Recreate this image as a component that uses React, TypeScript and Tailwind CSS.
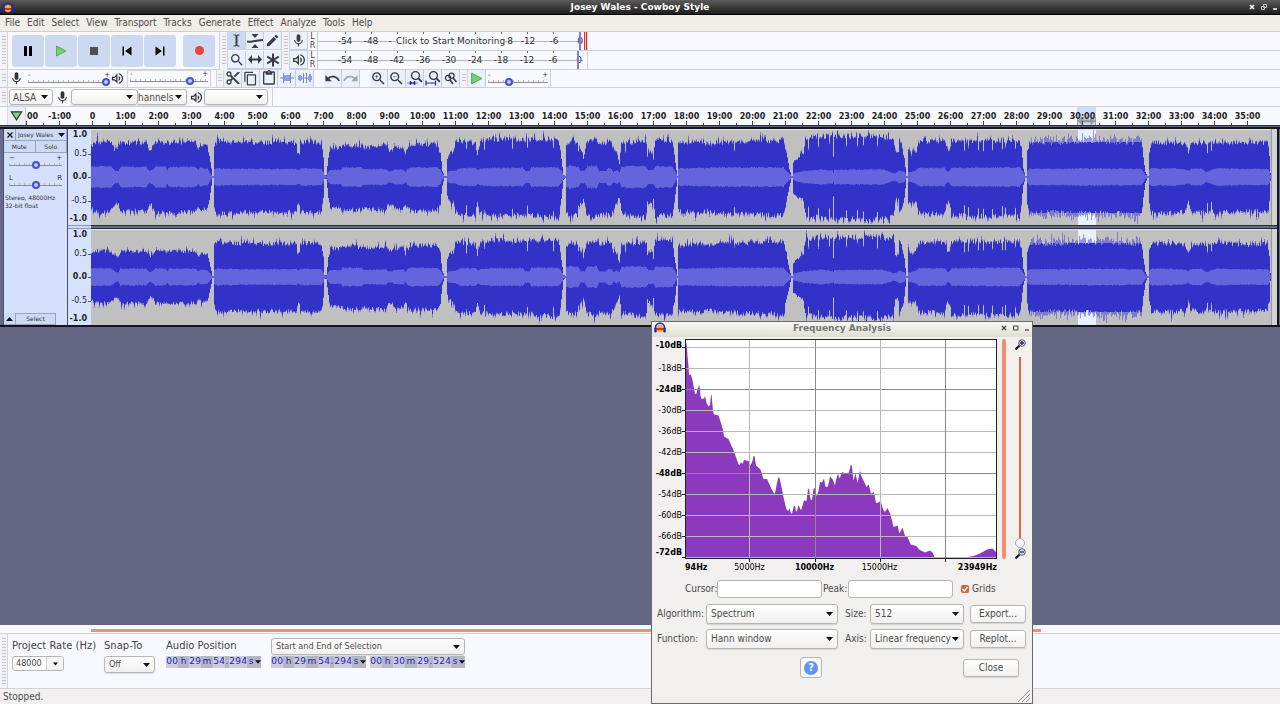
import React from "react";
import {
  MdSkipPrevious, MdSkipNext, MdEdit, MdMic, MdOutlineVolumeUp, MdContentCut, MdContentCopy,
  MdContentPaste, MdZoomIn, MdZoomOut, MdSearch, MdUndo, MdRedo,
} from "react-icons/md";

const COND = "font-['DejaVu_Sans_Condensed','DejaVu_Sans',sans-serif]";

/* ---------- waveform ---------- */

type Key = [number, number, number, number];

const CLIP_START = 91;
const CLIP_WIDTH = 1180;

// position, upper peak, lower peak, rms
const KEYS: Key[] = [
  [91, 30, 30, 10], [94, 35, 35, 10.5], [110, 35, 35, 10.5], [113, 29, 30, 8], [115, 27, 26, 6], [118, 28, 28, 6], [120, 34, 34, 10], [146, 34, 34, 10],
  [149, 27, 27, 6], [152, 29, 27, 7], [155, 34, 35, 10.5], [165, 34, 35, 10], [167, 34, 35, 7], [169, 34, 35, 10], [195, 34, 34, 10], [198, 28, 30, 7], [200, 31, 32, 9],
  [207, 30, 31, 8], [209, 20, 22, 5], [211, 8, 9, 2], [212, 1, 1, 1], [213, 1, 1, 1], [214, 32, 30, 7.5], [217, 36, 36, 8.5], [240, 34, 35, 8], [296, 34, 35, 8],
  [297, 24, 26, 7], [299, 24, 26, 7], [300, 35, 35, 8.5], [321, 34, 35, 8], [323, 20, 20, 5], [324, 2, 2, 2], [326, 2, 2, 1], [328, 20, 20, 5], [330, 29, 30, 7],
  [340, 29, 30, 7], [342, 31, 32, 9.5], [361, 31, 33, 9.5], [363, 29, 31, 7.5], [385, 31, 33, 8], [388, 27, 27, 5.5], [392, 27, 27, 6], [394, 29, 31, 7.5], [403, 29, 31, 7.5],
  [405, 23, 25, 5], [407, 28, 30, 8], [410, 32, 33, 9.5], [436, 32, 33, 9.5], [440, 24, 26, 7], [442, 6, 8, 3], [444, 1, 1, 1], [446, 1, 1, 1], [447, 18, 18, 5],
  [449, 24, 24, 6], [453, 24, 25, 6], [455, 35, 34, 6.5], [460, 36, 37, 9], [475, 33, 37, 9], [477, 22, 26, 7], [480, 35, 36, 8], [490, 38, 38, 9], [522, 37, 38, 9],
  [525, 37, 37, 6], [529, 37, 37, 6], [531, 37, 38, 9.5], [558, 38, 41, 9.5], [561, 18, 22, 6], [563, 2, 3, 2], [565, 1, 1, 1], [566, 32, 34, 10], [570, 36, 38, 11], [578, 34, 38, 10],
  [580, 26, 26, 6], [584, 24, 26, 6], [587, 36, 38, 11], [596, 36, 39, 11], [599, 34, 37, 5.5], [605, 34, 37, 6], [608, 36, 38, 8.5], [611, 34, 38, 8], [613, 26, 32, 5],
  [616, 24, 26, 7], [619, 14, 20, 5], [621, 34, 36, 10], [630, 34, 39, 11], [645, 36, 40, 10.5], [648, 24, 26, 7], [653, 24, 26, 7], [655, 37, 39, 11], [672, 36, 38, 10],
  [675, 14, 18, 5], [677, 1, 1, 1], [678, 32, 34, 8.5], [700, 34, 36, 9], [708, 32, 33, 9], [715, 34, 36, 9.5], [783, 36, 38, 9.5], [786, 24, 24, 6], [789, 8, 10, 3], [791, 1, 1, 1],
  [792, 1, 1, 1], [793, 15, 17, 3.5], [803, 23, 23, 6], [805, 38, 37, 6], [820, 41, 41, 7.5], [832, 40, 41, 6.5], [833, 20, 20, 5], [834, 40, 41, 7], [860, 41, 42, 7.5],
  [882, 40, 42, 7.5], [893, 39, 40, 4], [895, 22, 22, 4], [898, 24, 22, 6], [899, 36, 36, 6.5], [901, 32, 34, 6], [904, 18, 20, 5], [906, 1, 1, 1], [907, 1, 1, 1], [908, 28, 25, 5],
  [911, 22, 25, 5], [916, 26, 26, 7], [918, 35, 36, 9], [944, 36, 36, 9], [947, 26, 24, 5], [949, 27, 26, 6], [951, 36, 38, 9], [1019, 36, 39, 9.5], [1021, 30, 26, 7],
  [1023, 8, 8, 4], [1025, 1, 1, 1], [1026, 1, 1, 1], [1027, 26, 28, 6], [1029, 34, 36, 8], [1060, 34, 35, 8], [1085, 36, 36, 8.5], [1141, 34, 36, 8], [1143, 20, 20, 5],
  [1145, 5, 6, 2], [1147, 1, 1, 1], [1148, 1, 1, 1], [1149, 26, 26, 7], [1151, 34, 35, 8.5], [1170, 34, 36, 8.5], [1185, 32, 34, 7.5], [1188, 25, 25, 6], [1191, 32, 34, 8],
  [1200, 34, 36, 8.5], [1206, 32, 34, 5], [1211, 33, 34, 7], [1216, 35, 36, 8.5], [1240, 33, 34, 8], [1267, 34, 34, 8], [1269, 22, 24, 6], [1270, 4, 4, 2], [1271, 0, 0, 0],
];

// narrow gaps inside the loud passages
const NOTCHES = [578, 583, 625, 647, 653, 734, 808, 818, 829, 846, 857, 863, 877, 964, 968, 978, 983, 992, 1002, 1005, 1015, 466, 484, 512, 527, 553, 1207, 1211];

function rand(n: number) {
  const s = Math.sin(n * 127.1 + 311.7) * 43758.5453;
  return s - Math.floor(s);
}

function sample(x: number): [number, number, number] {
  let i = 0;
  while (i < KEYS.length - 2 && KEYS[i + 1][0] <= x) i++;
  const a = KEYS[i];
  const b = KEYS[i + 1];
  const t = Math.min(1, Math.max(0, (x - a[0]) / (b[0] - a[0])));
  return [a[1] + (b[1] - a[1]) * t, a[2] + (b[2] - a[2]) * t, a[3] + (b[3] - a[3]) * t];
}

function buildWave(channel: number) {
  const mid = 48;
  let peaks = "";
  let selected = "";
  let body = "";
  let rms = "";
  for (let i = 0; i < CLIP_WIDTH; i++) {
    const x = i + CLIP_START;
    const [t, b, r] = sample(x);
    const gain = channel === 1 ? (x < 213 ? 0.74 : 0.97) : 1;
    const n = i + channel * 31;
    let top = t * gain * (1 + (rand(n * 3.3) - 0.5) * 0.14);
    let bot = b * gain * (1 + (rand(n * 5.7 + 9) - 0.5) * 0.14);
    if (NOTCHES.includes(x)) {
      top *= 0.75;
      bot *= 0.78;
    }
    const held = x > 1029 && x < 1142;
    if (held) {
      top = Math.min(top, 35 * gain);
      bot = Math.min(bot, 36 * gain);
    }
    const spikeT = rand(n * 7.1 + 2) > 0.84 ? rand(n * 2.9) * 6 : 0;
    const spikeB = rand(n * 9.7 + 5) > 0.84 ? rand(n * 4.1) * 6 : 0;
    const haloT = rand(n * 1.9 + 4) * (held ? 7 : 2);
    const haloB = rand(n * 2.3 + 6) * (held ? 7 : 2);
    const loud = t > 20 ? 1 : 0;
    const bt = Math.min(46, top + (held ? 0 : spikeT * loud * 0.7));
    const bb = Math.min(46, bot + (held ? 0 : spikeB * loud * 0.7));
    const pt = Math.min(47, top + (spikeT + haloT) * loud);
    const pb = Math.min(47, bot + (spikeB + haloB) * loud);
    const bar = (u: number, d: number) => `M${i} ${(mid - u).toFixed(1)}h1V${(mid + d).toFixed(1)}h-1z`;
    if (x >= 1078 && x < 1096) selected += bar(pt, pb);
    else peaks += bar(pt, pb);
    body += bar(bt, bb);
    const rr = r * (0.95 + rand(n * 6.1) * 0.12) * (channel === 1 ? (x < 213 ? 0.82 : 0.96) : 1);
    rms += bar(rr, rr);
  }
  return { peaks, selected, body, rms };
}

const WAVES = [buildWave(0), buildWave(1)];

function Waveform({ channel }: { channel: number }) {
  const w = WAVES[channel];
  return (
    <svg width={CLIP_WIDTH} height="96" viewBox="0 0 1180 96" className="block shrink-0" role="img" aria-label={`Channel ${channel + 1}`}>
      <rect width="1180" height="96" fill="#c0c0c0" />
      <rect x="987" width="18" height="96" fill="#e9f0ff" />
      <rect width="1180" height="1" fill="#e4e4e4" />
      <path d={w.peaks} fill="#7c7cce" />
      <path d={w.selected} fill="#9494ee" />
      <path d={w.body} fill="#3232c8" />
      <path d={w.rms} fill="#6464dc" />
    </svg>
  );
}

/* ---------- small parts ---------- */

function Logo() {
  return (
    <svg width="12" height="11" viewBox="0 0 24 22" aria-hidden="true">
      <ellipse cx="12" cy="13" rx="7" ry="7.500" fill="#f2b51d" />
      <rect x="5" y="12" width="14" height="4" fill="#e0301e" />
      <path d="M3 14V11a9 8.500 0 0 1 18 0v3" fill="none" stroke="#1a22c8" strokeWidth="3" />
      <rect x="0.500" y="11" width="5" height="10" rx="2.400" fill="#1a22c8" />
      <rect x="18.500" y="11" width="5" height="10" rx="2.400" fill="#1a22c8" />
    </svg>
  );
}

function Grip({ className = "" }: { className?: string }) {
  return (
    <div className={`flex w-2 shrink-0 items-stretch justify-center border-r border-[#d3d4da] bg-[#f3f3f7] py-1 ${className}`}>
      <div className="w-1 bg-[repeating-linear-gradient(#c2c3c8_0_1px,transparent_1px_3px)]" />
    </div>
  );
}

function Tool({ label, active = false, children }: { label: string; active?: boolean; children: React.ReactNode }) {
  return (
    <button
      aria-label={label}
      className={`flex h-[18px] w-[18px] shrink-0 items-center justify-center border-r border-b border-[#c3cbe0] text-[#3c3c3c] ${active ? "bg-[#ccd9f2]" : "bg-[#eaf1fd]"}`}
    >
      <span className="flex shrink-0">{children}</span>
    </button>
  );
}

function BigButton({ label, children }: { label: string; children: React.ReactNode }) {
  return (
    <button aria-label={label} className="flex h-8 w-8 shrink-0 items-center justify-center rounded-[3px] bg-[#cdd9f1] text-black">
      {children}
    </button>
  );
}

function Slider({ label, value, className }: { label: string; value: number; className: string }) {
  return (
    <input
      type="range"
      aria-label={label}
      defaultValue={value}
      className={`block h-2 appearance-none bg-[linear-gradient(#8c8c92,#8c8c92),repeating-linear-gradient(90deg,#b9b9bf_0_1px,transparent_1px_5px)] bg-[length:100%_1px,100%_2px] bg-[position:0_4px,0_2px] bg-no-repeat [&::-webkit-slider-thumb]:h-2 [&::-webkit-slider-thumb]:w-2 [&::-webkit-slider-thumb]:appearance-none [&::-webkit-slider-thumb]:rounded-full [&::-webkit-slider-thumb]:border-2 [&::-webkit-slider-thumb]:border-[#4350dc] [&::-webkit-slider-thumb]:bg-[#c5cbf6] ${className}`}
    />
  );
}

function Marks({ left, right }: { left: string; right: string }) {
  return (
    <div className="flex justify-between text-[7px] leading-[6px] text-[#333]">
      <span>{left}</span>
      <span>{right}</span>
    </div>
  );
}

function Caret({ className = "" }: { className?: string }) {
  return (
    <svg width="7" height="4" viewBox="0 0 7 4" className={className} aria-hidden="true">
      <path d="M0 0h7L3.500 4z" fill="#111" />
    </svg>
  );
}

function Combo({ id, label, value, className, text = "pl-1" }: { id: string; label?: string; value: string; className: string; text?: string }) {
  return (
    <div className={`relative shrink-0 ${className}`}>
      <select
        id={id}
        aria-label={label}
        className={`block h-full w-full appearance-none rounded-[3px] border border-[#b8b5b1] bg-linear-to-b from-white to-[#f1f0ef] py-0 pr-2 text-[#4c4c4c] shadow-[0_1px_1px_rgba(0,0,0,0.12)] ${text}`}
      >
        <option>{value}</option>
      </select>
      <Caret className="pointer-events-none absolute top-1/2 right-[5px] -mt-0.5" />
    </div>
  );
}

/* ---------- main window bars ---------- */

const MENUS = ["File", "Edit", "Select", "View", "Transport", "Tracks", "Generate", "Effect", "Analyze", "Tools", "Help"];

function TitleBar() {
  return (
    <header className="flex h-[15px] items-center border-b border-black bg-linear-to-b from-[#5c5c5c] via-[#3c3c3c] to-[#1e1e1e] px-0.5">
      <div className="flex flex-1"><Logo /></div>
      <h1 className="text-[9px] leading-3 font-bold text-white">Josey Wales - Cowboy Style</h1>
      <div className="flex flex-1 items-center justify-end gap-1.5 text-white">
        <button aria-label="Close window"><svg width="6" height="6" viewBox="0 0 6 6"><path d="M1 1l4 4M5 1l-4 4" stroke="currentColor" strokeWidth="1.500" /></svg></button>
        <button aria-label="Restore window"><svg width="6" height="6" viewBox="0 0 6 6"><path d="M2.500 .5h3v3h-3zM.5 2.500h3v3h-3z" fill="none" stroke="#c8c8c8" strokeWidth="1" /></svg></button>
        <button aria-label="Minimize window"><svg width="5" height="6" viewBox="0 0 5 6"><path d="M0 5h4" stroke="currentColor" strokeWidth="1.500" /></svg></button>
      </div>
    </header>
  );
}

function MenuBar() {
  return (
    <nav className={`flex h-[17px] items-center gap-[7px] border-b border-[#d3d0cc] bg-[#f1ede8] px-[5px] text-[10px] text-[#4b4b4b] ${COND}`}>
      {MENUS.map((m) => (
        <button key={m} className="leading-3">{m}</button>
      ))}
    </nav>
  );
}

const LEVELS = ["-54", "-48", "-42", "-36", "-30", "-24", "-18", "-12", "-6"];

function MeterRow({ label, notice, icon }: { label: string; notice?: string; icon: React.ReactNode }) {
  const cell = (m: string) => <span key={m} className="w-[26px] shrink-0 text-center">{m}</span>;
  return (
    <div className="flex h-[19px] border-b border-[#cfd0d8]">
      <Tool label={label}>{icon}</Tool>
      <div className="flex w-[9px] flex-col items-center justify-center text-[8px] leading-[9px] text-[#444]">
        <span>L</span>
        <span>R</span>
      </div>
      <div className="relative flex w-[266px] shrink-0 flex-col border-l border-[#c9cad2] bg-[linear-gradient(#b4b5bd,#b4b5bd)] bg-[length:100%_1px] bg-center bg-no-repeat pb-0.5 pl-[14px] text-[9px] text-[#2f2f2f]">
        <div className="flex h-0.5">
          {LEVELS.map((m) => (
            <span key={m} className="flex w-[26px] shrink-0 justify-center"><span className="w-px bg-[#666]" /></span>
          ))}
        </div>
        <div className="flex flex-1 items-center leading-[14px]">
          {notice ? (
            <>
              {LEVELS.slice(0, 2).map(cell)}
              <span className="w-3 text-center">-</span>
              <span className="bg-[#f8f9ff] whitespace-nowrap">{notice}</span>
              <span className="flex-1 text-center">8</span>
              {LEVELS.slice(7).map(cell)}
            </>
          ) : LEVELS.map(cell)}
          <span className="w-4 shrink-0 text-right">0</span>
        </div>
        <span className={`absolute top-0 h-full w-0.5 bg-[#7c7cf2] ${notice ? "right-0.5" : "right-1"}`} />
        {notice && <span className="absolute top-0 -right-1 h-full w-[3px] border-x border-[#e03030] bg-[#f8c8c8]" />}
      </div>
      <div className="ml-1 w-px bg-[#cfd0d8]" />
    </div>
  );
}

function Selector() {
  return (
    <svg width="9" height="13" viewBox="0 0 9 13"><path d="M1.500 1H4v11H1.500M7.500 1H5v11h2.500M4.500 1v11" fill="none" stroke="currentColor" strokeWidth="1" /></svg>
  );
}

function Envelope() {
  return (
    <svg width="16" height="14" viewBox="0 0 16 14"><path d="M4.500 0h7L8 4zM4.500 14h7L8 10z" fill="currentColor" /><path d="M0 7.500C4 8.500 5 7 8 7s4-1 8-1" fill="none" stroke="currentColor" strokeWidth="2" /></svg>
  );
}

function Shift() {
  return (
    <svg width="14" height="9" viewBox="0 0 14 9"><path d="M0 4.500L4 0v9zM14 4.500L10 0v9z" fill="currentColor" /><path d="M3 4.500h8" stroke="currentColor" strokeWidth="2" /></svg>
  );
}

function Star() {
  return (
    <svg width="14" height="14" viewBox="0 0 14 14"><path d="M7 .5v13M1.200 3.700l11.600 6.600M1.200 10.300l11.600-6.600" stroke="currentColor" strokeWidth="2" /></svg>
  );
}

function Play({ size }: { size: number }) {
  return (
    <svg width={size} height={size} viewBox="0 0 12 12"><path d="M1.500 1l9.500 5-9.500 5z" fill="#6fd36b" stroke="#4f9a4d" strokeWidth="0.800" /></svg>
  );
}

function Fit({ whole = false }: { whole?: boolean }) {
  return (
    <svg width="16" height="16" viewBox="0 0 16 16">
      <circle cx="8.500" cy="5.500" r="3.900" fill="none" stroke="#333" strokeWidth="1.300" />
      <path d="M11.200 8.200l3.600 3.600" stroke="#333" strokeWidth="1.800" />
      {whole
        ? <path d="M1 10.500v5M10.500 10.500v5M1 13h9.500" stroke="#2626b4" strokeWidth="1.200" fill="none" />
        : <path d="M0 13h3M8 13h3M3 11L5.500 13l-2.500 2zM8 11L5.500 13l2.500 2z" stroke="#2626b4" strokeWidth="0.600" fill="#2626b4" />}
    </svg>
  );
}

function TrimWave({ silence = false }: { silence?: boolean }) {
  return (
    <svg width="14" height="10" viewBox="0 0 14 10">
      {silence
        ? <path d="M0 3h1v4H0zM1 2h2v6H1zM3 3h1v4H3zM10 3h1v4h-1zM11 1h2v8h-2zM13 3h1v4h-1z" fill="#8f9cf0" />
        : <path d="M4 2h6v6H4z" fill="#8f9cf0" />}
      <path d={silence ? "M4 5h6M5.500 0v10M8.500 0v10" : "M0 5h4M10 5h4M3.500 0v10M10.500 0v10"} stroke="#7c87b4" strokeWidth="1" />
    </svg>
  );
}

function Toolbars() {
  return (
    <section className="bg-[#f8f9ff]">
      <div className="flex h-[38px]">
        <div className="flex w-[220px] shrink-0 items-center border-r border-b border-[#cfd0d8]">
          <Grip className="h-full" />
          <div className="flex gap-px pl-1">
            <BigButton label="Pause"><svg width="8" height="10" viewBox="0 0 8 10"><path d="M0 0h3v10H0zM5 0h3v10H5z" /></svg></BigButton>
            <BigButton label="Play"><Play size={12} /></BigButton>
            <BigButton label="Stop"><span className="h-2 w-2 bg-[#4f4f4f]" /></BigButton>
            <BigButton label="Skip to start"><MdSkipPrevious size={18} /></BigButton>
            <BigButton label="Skip to end"><MdSkipNext size={18} /></BigButton>
          </div>
          <div className="pl-[7px]"><BigButton label="Record"><span className="h-[9px] w-[9px] rounded-full bg-[#e64343]" /></BigButton></div>
        </div>
        <Grip />
        <div className="grid shrink-0 grid-cols-3 content-between border-b border-[#cfd0d8]">
          <Tool label="Selection tool" active><Selector /></Tool>
          <Tool label="Envelope tool"><Envelope /></Tool>
          <Tool label="Draw tool"><MdEdit size={15} /></Tool>
          <Tool label="Zoom tool"><MdSearch size={16} /></Tool>
          <Tool label="Time shift tool"><Shift /></Tool>
          <Tool label="Multi-tool"><Star /></Tool>
        </div>
        <Grip />
        <div className="min-w-0 flex-1">
          <MeterRow label="Recording meter" icon={<MdMic size={15} />} notice="Click to Start Monitoring" />
          <MeterRow label="Playback meter" icon={<MdOutlineVolumeUp size={16} />} />
        </div>
      </div>

      <div className="flex h-[18px] items-center border-b border-[#cfd0d8]">
        <Grip className="h-full" />
        <MdMic size={15} className="ml-px shrink-0 text-[#333]" />
        <div className="ml-1 w-[82px]">
          <Marks left="-" right="+" />
          <Slider label="Recording volume" value={100} className="w-full" />
        </div>
        <MdOutlineVolumeUp size={15} className="shrink-0 text-[#333]" />
        <div className="ml-0.5 w-[84px] border border-[#cfd0d8] px-0.5 pb-0.5">
          <Marks left="-" right="+" />
          <Slider label="Playback volume" value={80} className="w-full" />
        </div>
        <Grip className="ml-[5px] h-full border-l" />
        <Tool label="Cut"><MdContentCut size={16} /></Tool>
        <Tool label="Copy"><MdContentCopy size={15} /></Tool>
        <Tool label="Paste"><MdContentPaste size={16} /></Tool>
        <Tool label="Trim audio"><TrimWave /></Tool>
        <Tool label="Silence audio"><TrimWave silence /></Tool>
        <div className="w-2.5" />
        <Tool label="Undo"><MdUndo size={17} /></Tool>
        <Tool label="Redo"><span className="text-[#a5a5a5]"><MdRedo size={17} /></span></Tool>
        <div className="w-2.5" />
        <Tool label="Zoom in"><MdZoomIn size={17} /></Tool>
        <Tool label="Zoom out"><MdZoomOut size={17} /></Tool>
        <Tool label="Fit selection"><Fit /></Tool>
        <Tool label="Fit project"><Fit whole /></Tool>
        <Tool label="Zoom toggle">
          <svg width="13" height="13" viewBox="0 0 13 13"><g fill="none" stroke="currentColor" strokeWidth="1.300"><circle cx="4" cy="6" r="2.600" /><circle cx="7.500" cy="3.800" r="2.600" /><path d="M6 8l3 4M9 6l3.500 4" strokeWidth="1.800" /></g></svg>
        </Tool>
        <Grip className="h-full" />
        <Tool label="Play at speed"><Play size={13} /></Tool>
        <div className="ml-0.5 w-[60px]">
          <Marks left="-" right="+" />
          <Slider label="Playback speed" value={32} className="w-full" />
        </div>
        <div className="ml-0.5 h-full w-px bg-[#cfd0d8]" />
      </div>

      <div className={`flex h-[19px] items-center border-b border-[#cfd0d8] text-[10px] ${COND}`}>
        <Grip className="h-full" />
        <Combo id="host" label="Audio host" value="ALSA" className="ml-px h-4 w-11" text="pl-[3px]" />
        <MdMic size={15} className="ml-0.5 shrink-0 text-[#333]" />
        <Combo id="indev" label="Recording device" value="" className="ml-px h-4 w-[67px]" />
        <Combo id="chan" label="Recording channels" value="hannels" className="h-4 w-[49px]" text="pl-0 border-l-0 rounded-l-none" />
        <MdOutlineVolumeUp size={15} className="ml-0.5 shrink-0 text-[#333]" />
        <Combo id="outdev" label="Playback device" value="" className="h-4 w-16" />
        <div className="ml-1 h-full w-px bg-[#cfd0d8]" />
      </div>
    </section>
  );
}

function TimeRuler() {
  const labels: string[] = ["00"];
  for (let m = -1; m <= 35; m++) labels.push(m === 0 ? "0" : `${m}:00`);
  return (
    <div className="flex h-[18px] bg-[#f8f9ff]">
      <div className="w-2 shrink-0 border-r border-[#dcdde4]" />
      <button aria-label="Pinned play head" className="flex w-[18px] shrink-0 items-center justify-center border-r border-[#c3cbe0] bg-[#eaf1fd]">
        <svg width="13" height="10" viewBox="0 0 11 9"><path d="M.8.8h9.400L5.500 8z" fill="#7fd67b" stroke="#333" strokeWidth="1" /></svg>
      </button>
      <div className="relative flex min-w-0 flex-1 overflow-hidden">
        <div className="absolute top-0 left-[1051px] h-full w-[19px] bg-[#cfdff9]" />
        <svg width="19" height="8" viewBox="0 0 19 8" className="absolute bottom-0 left-[1051px]"><path d="M.5 0v8M18.500 0v8M1 4l4-3.500v7zM18 4l-4-3.500v7zM4 3h11v2H4z" fill="#a9a9a9" stroke="#8c8c8c" strokeWidth="0.800" /></svg>
        <div className="relative -ml-4 flex">
          {labels.map((l, i) => (
            <div key={l} className="flex w-[33px] shrink-0 flex-col items-center justify-between">
              <span className={`pt-[5px] text-[8px] leading-[9px] font-bold text-[#222] ${i === 0 ? "pl-3" : ""}`}>{l}</span>
              <svg width="33" height="4" viewBox="0 0 33 4" className="block"><path d="M0 2h1v2H0zM16 0h1v4h-1z" fill="#444" /></svg>
            </div>
          ))}
        </div>
      </div>
    </div>
  );
}

/* ---------- track ---------- */

const SCALE_ROWS = [
  { t: "1.0", c: "font-bold" },
  { t: "0.5", c: "mt-[9px]" },
  { t: "0.0", c: "mt-[13px] font-bold" },
  { t: "-0.5", c: "mt-[14px]" },
  { t: "-1.0", c: "mt-2 font-bold" },
];

function Scale() {
  return (
    <div className="flex h-24 flex-col bg-[#d6e2fd] pt-px text-[8px] leading-[10px] text-[#222]">
      {SCALE_ROWS.map((r) => (
        <div key={r.t} className={`flex items-center justify-end gap-px ${r.c}`}>
          <span>{r.t}</span>
          <span className={r.t.includes("1.0") ? "w-[3px]" : "h-px w-[3px] bg-[#555]"} />
        </div>
      ))}
    </div>
  );
}

const PANEL_BTN = "border-r border-b border-[#98a3c0] bg-[#cddaf5] text-[6px] leading-[10px] text-[#333]";

function Track() {
  return (
    <div className="flex h-[200px] overflow-hidden border-t-2 border-b-2 border-[#15151f] bg-[#676a8c] pl-[3px]">
      <aside className="flex w-[65px] shrink-0 flex-col border-x border-[#4a4d66] bg-[#d5e0fc]">
        <div className="flex h-3">
          <button aria-label="Close track" className={`flex w-3 items-center justify-center ${PANEL_BTN}`}>
            <svg width="6" height="6" viewBox="0 0 6 6"><path d="M.5.5l5 5M5.500.5l-5 5" stroke="#111" strokeWidth="1.200" /></svg>
          </button>
          <button className={`flex flex-1 items-center justify-between pr-px pl-0.5 whitespace-nowrap ${PANEL_BTN}`}>
            Josey Wales
            <Caret />
          </button>
        </div>
        <div className="flex h-3">
          <button className={`flex-1 ${PANEL_BTN}`}>Mute</button>
          <button className={`flex-1 ${PANEL_BTN}`}>Solo</button>
        </div>
        <div className="flex flex-col px-[5px] pt-0.5">
          <Marks left="−" right="+" />
          <Slider label="Gain" value={50} className="w-full" />
          <div className="h-1.5" />
          <Marks left="L" right="R" />
          <Slider label="Pan" value={50} className="w-full" />
        </div>
        <p className="pt-[5px] pl-px text-[6px] leading-2 whitespace-nowrap text-[#333]">Stereo, 48000Hz<br />32-bit float</p>
        <div className="mt-auto flex h-3">
          <button aria-label="Collapse track" className={`flex w-3 items-center justify-center ${PANEL_BTN}`}>
            <svg width="7" height="4" viewBox="0 0 7 4"><path d="M0 4h7L3.500 0z" fill="#111" /></svg>
          </button>
          <button className={`w-10 border-t ${PANEL_BTN}`}>Select</button>
        </div>
      </aside>
      <div className="flex w-[23px] shrink-0 flex-col">
        <Scale />
        <div className="h-1 border-y border-[#8a97b8] bg-[#cddaf5]" />
        <Scale />
      </div>
      <div className="flex min-w-0 flex-1 flex-col">
        {[0, 1].map((c) => (
          <React.Fragment key={c}>
            {c === 1 && <div className="h-1 shrink-0 border-y border-[#262834]" />}
            <div className="flex h-24 bg-[#d3d3d3]">
              <Waveform channel={c} />
              <div className="w-px shrink-0 bg-[#9a9a9a]" />
            </div>
          </React.Fragment>
        ))}
      </div>
      <div className="w-[3px] shrink-0 border-l-2 border-[#15151f]" />
    </div>
  );
}

/* ---------- bottom ---------- */

function TimeField({ label, value }: { label: string; value: string }) {
  const [h, m, s, ms] = value.split(":");
  const digits = (d: string) => d.split("").map((c, i) => <span key={i} className="w-1.5 bg-[#cbcce0]">{c}</span>);
  return (
    <div role="group" aria-label={label} className="flex h-3 w-[95px] items-stretch bg-[#b4b6c8] text-center text-[9px] leading-[11px] text-[#2525a8]">
      {digits(h)}
      <span className="w-[11px]">h</span>
      {digits(m)}
      <span className="w-3">m</span>
      {digits(s)}
      <span className="w-1">.</span>
      {digits(ms)}
      <span className="w-2">s</span>
      <button aria-label={`${label} format`} className="flex w-1.5 items-center"><Caret /></button>
    </div>
  );
}

function SelectionBar() {
  return (
    <section className="flex h-14 border-t border-b border-[#d3d4da] bg-[#f8f9ff] text-[#444]">
      <Grip />
      <div className="flex pt-1 pl-1">
        <div className="flex w-[92px] flex-col gap-[3px]">
          <label htmlFor="rate" className="text-[10px] leading-[15px]">Project Rate (Hz)</label>
          <div className={`flex h-[15px] w-[52px] overflow-hidden rounded-[3px] border border-[#b8b5b1] bg-white ${COND}`}>
            <input id="rate" defaultValue="48000" className="w-[34px] border-r border-[#d0cecb] pl-[3px] text-[9px]" />
            <button aria-label="Choose rate" className="flex flex-1 items-center justify-center bg-[#f6f5f5]"><Caret className="w-[5px]" /></button>
          </div>
        </div>
        <div className="flex w-[62px] flex-col gap-[3px]">
          <label htmlFor="snap" className="text-[10px] leading-[15px]">Snap-To</label>
          <Combo id="snap" value="Off" className={`h-[17px] w-[51px] text-[9px] ${COND}`} />
        </div>
        <div className="flex w-[105px] flex-col gap-[3px]">
          <span className="text-[10px] leading-[15px]">Audio Position</span>
          <TimeField label="Audio position" value="00:29:54:294" />
        </div>
        <div className="flex flex-col gap-px">
          <Combo id="seltype" label="Selection display" value="Start and End of Selection" className={`h-[17px] w-[194px] text-[9px] ${COND}`} />
          <div className="flex gap-1">
            <TimeField label="Selection start" value="00:29:54:294" />
            <TimeField label="Selection end" value="00:30:29:524" />
          </div>
        </div>
      </div>
    </section>
  );
}

/* ---------- frequency analysis ---------- */

const SPECTRUM: [number, number][] = [
  [0, 0], [2, 7], [2.5, 17], [3.500, 27], [4, 36], [6, 35.500], [7.500, 41], [10, 55], [11.500, 54.500], [12.500, 50], [14.500, 46], [15.500, 57], [16.500, 60], [19, 59.500],
  [20, 57], [21.500, 64], [23.500, 67.500], [25, 66], [26, 56], [26.600, 56], [28, 72], [29, 75.500], [33.500, 76.500], [36, 84], [38, 91], [39, 97.500], [43.500, 100], [46, 106],
  [48, 110], [51, 118], [53.500, 125.500], [54.600, 126], [56, 123], [57.500, 125], [59, 121], [63.500, 122], [65.500, 126.500], [67.500, 122], [68.500, 117], [69.500, 117],
  [71, 126.500], [75.500, 130.500], [78.500, 140], [82, 140], [87, 151], [89, 154.500], [90, 154], [92, 144], [93.500, 138], [94.600, 139], [97, 150.500], [99, 160.500],
  [101.500, 170.500], [103.500, 172], [104.500, 169], [106, 174.500], [107, 174.500], [109, 166.500], [110, 167], [111, 172.500], [112, 172], [113.500, 166], [116, 171.500], [119, 161.500],
  [121.500, 162], [123, 150.500], [124, 149.500], [125.500, 160.500], [127, 161], [128.500, 150], [130, 149], [131.500, 157], [133.500, 152], [135, 143], [137, 143.500], [139, 139.500],
  [140.500, 148], [143, 147.500], [145, 137.500], [147.500, 140], [150, 146.500], [151, 141], [153, 134.500], [154.500, 139.500], [157.500, 133], [160, 134.500], [164, 133.500], [165.700, 126],
  [166.700, 126], [168.500, 141.500], [170.500, 134.500], [172.600, 144], [175, 131.500], [176.500, 137.500], [179, 142.500], [181.500, 148], [183.700, 145.500], [186, 154.500], [189, 153],
  [191, 164], [193.500, 163.500], [195.500, 161.500], [198, 170.500], [200, 173], [202.500, 169], [205.500, 175.500], [208.500, 188], [212.500, 186.500], [214.500, 194.500], [217.500, 188.500],
  [220, 197], [222.500, 198], [225.700, 205.500], [231.500, 207], [234, 210.500], [240, 213.500], [245, 211.500], [247.500, 213.500], [249.500, 218], [280, 218.500], [288.500, 217],
  [295, 214.500], [302, 210.500], [307.500, 209.500], [312, 214],
];

const DB_MID = "h-[21px] leading-[21px]";

const DB_LABELS = [
  { t: "-10dB", c: "h-[18px] leading-3 font-bold" },
  { t: "-18dB", c: DB_MID },
  { t: "-24dB", c: "h-[21px] leading-[21px] font-bold" },
  { t: "-30dB", c: DB_MID },
  { t: "-36dB", c: DB_MID },
  { t: "-42dB", c: DB_MID },
  { t: "-48dB", c: "h-[21px] leading-[21px] font-bold" },
  { t: "-54dB", c: DB_MID },
  { t: "-60dB", c: DB_MID },
  { t: "-66dB", c: DB_MID },
  { t: "-72dB", c: "leading-3 font-bold" },
];

function SpectrumPlot() {
  const d = `M0 220L${SPECTRUM.map(([x, y]) => `${x} ${y}`).join("L")}L312 220z`;
  return (
    <svg width="315" height="223" viewBox="-3 0 315 223" className="block shrink-0" role="img" aria-label="Spectrum">
      <rect width="312" height="220" fill="#fff" />
      <path d={d} fill="#8c3abd" />
      <g shapeRendering="crispEdges">
        {[8, 29, 50, 71, 92, 113, 134, 155, 176, 197, 218].map((y, i) => (
          <React.Fragment key={y}>
            <rect x="0" y={y} width="312" height="1" fill={i === 2 || i === 6 ? "#8a8a8a" : "#b9b9b9"} />
            <rect x="-3" y={y} width="3" height="1" fill="#222" />
          </React.Fragment>
        ))}
        {[64, 130, 195, 260].map((x, i) => (
          <React.Fragment key={x}>
            <rect x={x} y="0" width="1" height="220" fill={i % 2 ? "#8a8a8a" : "#b9b9b9"} />
            <rect x={x} y="220" width="1" height="3" fill="#222" />
          </React.Fragment>
        ))}
        <path d="M0 0h312v220H0zM1 1v218h310V1z" fill="#222" fillRule="evenodd" />
      </g>
    </svg>
  );
}

function Magnifier({ plus = false }: { plus?: boolean }) {
  return (
    <svg width="11" height="11" viewBox="0 0 22 22" aria-hidden="true">
      <path d="M1 21l8-8" stroke="#111" strokeWidth="4" />
      <circle cx="14" cy="8" r="6.500" fill="#e6e8ff" stroke="#444" strokeWidth="1.800" />
      <path d={plus ? "M10 8h8M14 4v8" : "M10 8h8"} stroke="#2323a8" strokeWidth="2.800" />
    </svg>
  );
}

const DIALOG_BTN = "h-[18px] rounded-[3px] border border-[#b8b5b1] bg-linear-to-b from-white to-[#f1f0ef] leading-3 shadow-[0_1px_1px_rgba(0,0,0,0.12)]";

function FrequencyDialog() {
  return (
    <section role="dialog" aria-label="Frequency Analysis" className={`absolute right-[247px] bottom-0 flex h-[383px] w-[382px] flex-col border border-[#6b6b62] bg-[#f1f0ee] text-[10px] text-[#4b4b4b] ${COND}`}>
      <header className="flex h-[15px] shrink-0 items-start bg-linear-to-b from-[#f9f9f5] to-[#deded2] px-0.5 font-['DejaVu_Sans',sans-serif]">
        <div className="flex flex-1"><Logo /></div>
        <h2 className="text-[9px] leading-3 font-bold text-[#757570]">Frequency Analysis</h2>
        <div className="flex h-3 flex-1 items-center justify-end gap-1.5 text-[#444]">
          <button aria-label="Close"><svg width="6" height="6" viewBox="0 0 6 6"><path d="M1 1l4 4M5 1l-4 4" stroke="currentColor" strokeWidth="1.300" /></svg></button>
          <button aria-label="Maximize"><svg width="6" height="6" viewBox="0 0 6 6"><path d="M.5 1h4.500v4H.5z" fill="none" stroke="currentColor" /></svg></button>
          <button aria-label="Minimize"><svg width="5" height="6" viewBox="0 0 5 6"><path d="M0 5h4" stroke="currentColor" strokeWidth="1.300" /></svg></button>
        </div>
      </header>

      <div className="flex pt-0.5 font-['DejaVu_Sans',sans-serif] text-[8px] text-black">
        <div className="flex h-[220px] w-[30px] shrink-0 flex-col pt-px text-right">
          {DB_LABELS.map((l) => (
            <span key={l.t} className={l.c}>{l.t}</span>
          ))}
        </div>
        <div>
          <SpectrumPlot />
          <div className="flex h-3 pl-[3px] text-center leading-3">
            <span className="w-8 text-left font-bold">94Hz</span>
            <span className="w-[65px]">5000Hz</span>
            <span className="w-[65px] font-bold">10000Hz</span>
            <span className="w-[65px]">15000Hz</span>
            <span className="flex-1 text-right font-bold">23949Hz</span>
          </div>
        </div>
        <div className="ml-[5px] h-[220px] w-1 rounded-xs bg-[#f28f6c]" />
        <div className="ml-[7px] flex h-[220px] w-[14px] flex-col items-center">
          <Magnifier plus />
          <input
            type="range"
            aria-label="Vertical zoom"
            defaultValue={0}
            className="mt-auto h-[191px] w-3 appearance-none bg-[linear-gradient(#d9683f,#d9683f)] bg-[length:2px_100%] bg-center bg-no-repeat [direction:rtl] [writing-mode:vertical-lr] [&::-webkit-slider-thumb]:h-2.5 [&::-webkit-slider-thumb]:w-2.5 [&::-webkit-slider-thumb]:appearance-none [&::-webkit-slider-thumb]:rounded-full [&::-webkit-slider-thumb]:border [&::-webkit-slider-thumb]:border-[#a8a5a0] [&::-webkit-slider-thumb]:bg-[#f6f5f4]"
          />
          <Magnifier />
        </div>
      </div>

      <div className="flex items-center pt-1.5 pl-[33px] leading-[14px]">
        <label htmlFor="cursor" className="w-8">Cursor:</label>
        <input id="cursor" readOnly className="h-[18px] w-[105px] rounded-[3px] border border-[#b8b5b1] bg-white px-1" />
        <label htmlFor="peak" className="w-[26px] pl-px">Peak:</label>
        <input id="peak" readOnly className="h-[18px] w-[105px] rounded-[3px] border border-[#b8b5b1] bg-white px-1" />
        <label className="ml-2 flex items-center gap-[3px]">
          <span className="relative flex h-2 w-2">
            <input type="checkbox" defaultChecked className="h-2 w-2 appearance-none rounded-xs bg-[#d9603a]" />
            <svg width="8" height="8" viewBox="0 0 8 8" className="pointer-events-none absolute inset-0"><path d="M1.500 4l2 2 3-4" fill="none" stroke="#fff" strokeWidth="1.300" /></svg>
          </span>
          Grids
        </label>
      </div>

      <div className="grid grid-cols-[49px_132px_32px_94px_56px] items-center gap-y-[5px] pt-1.5 pl-[5px] leading-[14px]">
        <label htmlFor="algo">Algorithm:</label>
        <Combo id="algo" value="Spectrum" className="h-5 w-full" />
        <label htmlFor="size" className="pl-[7px]">Size:</label>
        <Combo id="size" value="512" className="h-5 w-full" />
        <button className={`ml-1.5 -mr-1.5 ${DIALOG_BTN}`}>Export...</button>
        <label htmlFor="func">Function:</label>
        <Combo id="func" value="Hann window" className="h-5 w-full" />
        <label htmlFor="axis" className="pl-[7px]">Axis:</label>
        <Combo id="axis" value="Linear frequency" className="h-5 w-full" />
        <button className={`ml-1.5 -mr-1.5 ${DIALOG_BTN}`}>Replot...</button>
      </div>

      <div className="flex items-center justify-between pt-2 pr-[13px] pl-[148px]">
        <button aria-label="Help" className="flex h-[21px] w-[22px] items-center justify-center rounded-[3px] border border-[#b8b5b1] bg-[#f8f8f7]">
          <span className="h-[14px] w-[14px] rounded-full bg-[#5f94f8] text-[11px] leading-[14px] font-bold text-white">?</span>
        </button>
        <button className={`w-14 ${DIALOG_BTN}`}>Close</button>
      </div>
      <svg width="12" height="12" viewBox="0 0 12 12" className="mt-auto mr-0.5 mb-px ml-auto"><path d="M0 12L12 0M4 12l8-8M8 12l4-4" stroke="#8f8d89" strokeWidth="1" /></svg>
    </section>
  );
}

export default function App() {
  return (
    <div className="relative flex min-h-screen flex-col overflow-hidden bg-[#646684] font-['DejaVu_Sans',sans-serif]">
      <TitleBar />
      <MenuBar />
      <Toolbars />
      <TimeRuler />
      <main className="flex flex-1 flex-col border-t border-[#2b2d40] pt-px">
        <Track />
      </main>
      <div className="h-2 bg-[#f8f9ff] px-[91px] pt-1">
        <div className="mr-[148px] h-[3px] bg-[#f28f6c]" />
      </div>
      <SelectionBar />
      <footer className={`flex h-[15px] items-center bg-[#f1f0ee] px-[3px] text-[10px] text-[#4b4b4b] ${COND}`}>Stopped.</footer>
      <FrequencyDialog />
    </div>
  );
}
